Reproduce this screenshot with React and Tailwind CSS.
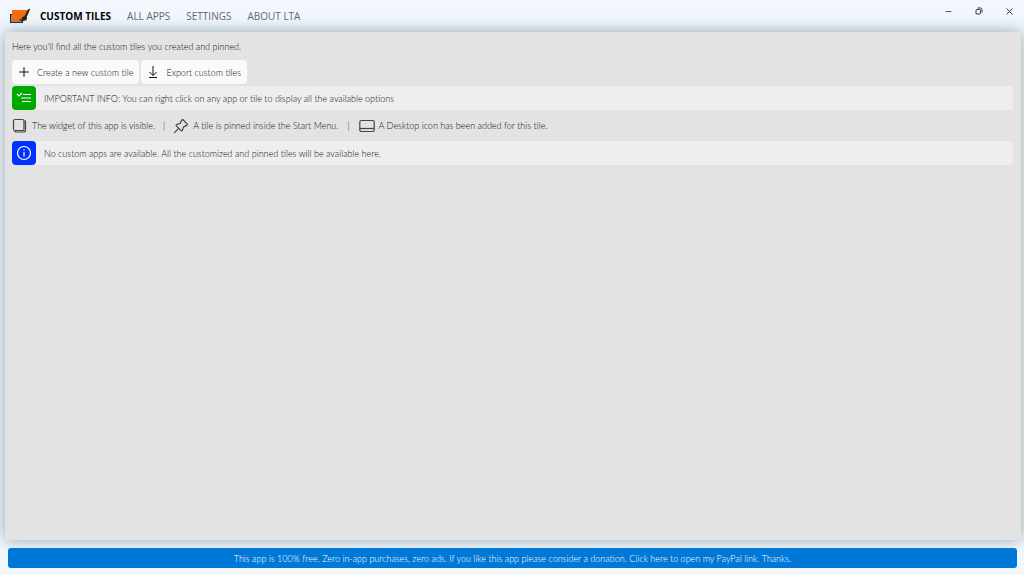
import { Minus, X } from 'lucide-react';

const tabs = ['CUSTOM TILES', 'ALL APPS', 'SETTINGS', 'ABOUT LTA'];

const Logo = () => (
    <svg className="w-5 h-4 shrink-0" viewBox="0 0 20 16" aria-hidden="true">
        <rect x="0.5" y="6.5" width="12" height="8" fill="#8d8987" stroke="#29211c" />
        <path d="M2 2h15v10.500H2z" fill="#e85a04" />
        <path d="M2 2h15v4L6 12.500H2z" fill="#fb7a12" opacity="0.6" />
        <path d="M19.5.5 17.500 2 14.500 8.300c-1.600.2-2.200 1.300-2.500 2.300-.3.900-1.500 1.600-3 1.700 2.200 1.600 6.400 1.200 7.700-1.700V9.100L20 1.500z" fill="#211d1b" />
    </svg>
);

const PlusIcon = () => (
    <svg className="size-4" viewBox="0 0 16 16" fill="none" stroke="currentColor" aria-hidden="true">
        <path d="M8 3v10M3 8h10" />
    </svg>
);

const DownloadIcon = () => (
    <svg className="size-4" viewBox="0 0 16 16" fill="none" stroke="currentColor" aria-hidden="true">
        <path d="M8 2v9.500M4.500 8 8 11.500 11.500 8M4 13.500h8" />
    </svg>
);

const ListIcon = () => (
    <svg className="size-4" viewBox="0 0 16 16" fill="none" stroke="currentColor" strokeWidth="1.2" aria-hidden="true">
        <path d="M1 4l2 2 3-3M7 4.500h8M5 8h10M6 11.500h9" />
    </svg>
);

const InfoIcon = () => (
    <svg className="size-4" viewBox="0 0 16 16" fill="none" stroke="currentColor" strokeWidth="1.2" aria-hidden="true">
        <circle cx="8" cy="8" r="6.5" />
        <path d="M8 7v4.500M8 4.500v1.200" />
    </svg>
);

const WidgetIcon = () => (
    <svg className="size-4 shrink-0" viewBox="0 0 16 16" fill="none" stroke="#444" strokeWidth="1.2" aria-hidden="true">
        <rect x="1.5" y="1.5" width="10.5" height="11" rx="1.5" />
        <path d="M12.500 2.500a1 1 0 0 1 1 1V12a2 2 0 0 1-2 2H4a1 1 0 0 1-1-1" />
    </svg>
);

const PinIcon = () => (
    <svg className="size-4 shrink-0" viewBox="0 0 16 16" fill="none" stroke="#444" strokeWidth="1.2" strokeLinejoin="round" aria-hidden="true">
        <path d="M9.700 1.500 14.500 6.300 13.700 7.400 10.600 8.900 9.300 12.600 8.400 12.900 3.100 7.600 3.400 6.700 7.100 5.400 8.600 2.300z" />
        <path d="M5.700 10.300 1.200 14.800" />
    </svg>
);

const DesktopIcon = () => (
    <svg className="size-4 shrink-0" viewBox="0 0 16 16" fill="none" stroke="#444" strokeWidth="1.2" aria-hidden="true">
        <rect x="0.8" y="2.5" width="14.4" height="11" rx="1.5" />
        <path d="M1 10.500h14" />
    </svg>
);

const ActionButton = ({ icon, children }) => (
    <button className="flex items-center h-6 pl-1 pr-1.5 gap-[5px] bg-[#fafafa] rounded-sm">
        {icon}
        <span className="pt-0.5">{children}</span>
    </button>
);

const InfoRow = ({ icon, color, children }) => (
    <div className="flex items-center h-6 bg-[#eeeeee] rounded-sm">
        <div className={`flex items-center justify-center size-6 shrink-0 rounded-sm text-white ${color}`}>
            {icon}
        </div>
        <p className="ml-2 pt-0.5">{children}</p>
    </div>
);

const App = () => {
    return (
        <div className="min-h-screen flex flex-col overflow-hidden bg-[#f2f7fe] font-[Lato,sans-serif] text-[9px] leading-3 font-light text-[#111]">
            <header className="flex items-center h-8 pl-2.5 shrink-0">
                <Logo />
                <nav className="flex items-center gap-4 ml-2.5 font-['Open_Sans',sans-serif] text-[10px] leading-4">
                    {tabs.map((tab, i) => (
                        <a key={tab} href="#" className={i === 0 ? 'font-bold text-black' : 'font-normal text-[#666]'}>
                            {tab}
                        </a>
                    ))}
                </nav>
                <div className="flex self-start ml-auto text-[#333]">
                    <button className="flex items-center justify-center w-8 h-[22px]" aria-label="Minimize">
                        <Minus size={9} />
                    </button>
                    <button className="flex items-center justify-center w-[30px] h-[22px]" aria-label="Restore">
                        <svg className="size-2" viewBox="0 0 8 8" fill="none" stroke="currentColor" aria-hidden="true">
                            <rect x="1" y="2.5" width="4.5" height="4.5" rx="1" />
                            <path d="M2.500 1H5.500A1.500 1.500 0 0 1 7 2.500v3" />
                        </svg>
                    </button>
                    <button className="flex items-center justify-center w-[30px] h-[22px]" aria-label="Close">
                        <X size={11} strokeWidth={2} />
                    </button>
                </div>
            </header>

            <main className="grow ml-[5px] mr-[3px] pl-[7px] pr-2 pt-[7px] bg-[#e3e3e3] rounded-sm shadow-[0_0_16px_#92a4a9]">
                <p className="leading-4">Here you'll find all the custom tiles you created and pinned.</p>

                <div className="flex gap-0.5 mt-[5px]">
                    <ActionButton icon={<PlusIcon />}>Create a new custom tile</ActionButton>
                    <ActionButton icon={<DownloadIcon />}>Export custom tiles</ActionButton>
                </div>

                <div className="mt-0.5">
                    <InfoRow icon={<ListIcon />} color="bg-[#00a900]">
                        IMPORTANT INFO: You can right click on any app or tile to display all the available options
                    </InfoRow>
                </div>

                <div className="flex items-center h-[31px]">
                    <WidgetIcon />
                    <span className="ml-1">The widget of this app is visible.</span>
                    <span className="mx-2">|</span>
                    <PinIcon />
                    <span className="ml-1">A tile is pinned inside the Start Menu.</span>
                    <span className="mx-[9px]">|</span>
                    <DesktopIcon />
                    <span className="ml-1">A Desktop icon has been added for this tile.</span>
                </div>

                <InfoRow icon={<InfoIcon />} color="bg-[#0032ff]">
                    No custom apps are available. All the customized and pinned tiles will be available here.
                </InfoRow>
            </main>

            <footer className="relative flex mt-2 mb-[7px] ml-2 mr-[7px] shrink-0">
                <button className="grow h-5 pt-0.5 bg-[#0078d7] rounded-[3px] text-white text-center">
                    This app is 100% free. Zero in-app purchases, zero ads. If you like this app please consider a donation. Click here to open my PayPal link. Thanks.
                </button>
            </footer>
        </div>
    );
};

export default App;
